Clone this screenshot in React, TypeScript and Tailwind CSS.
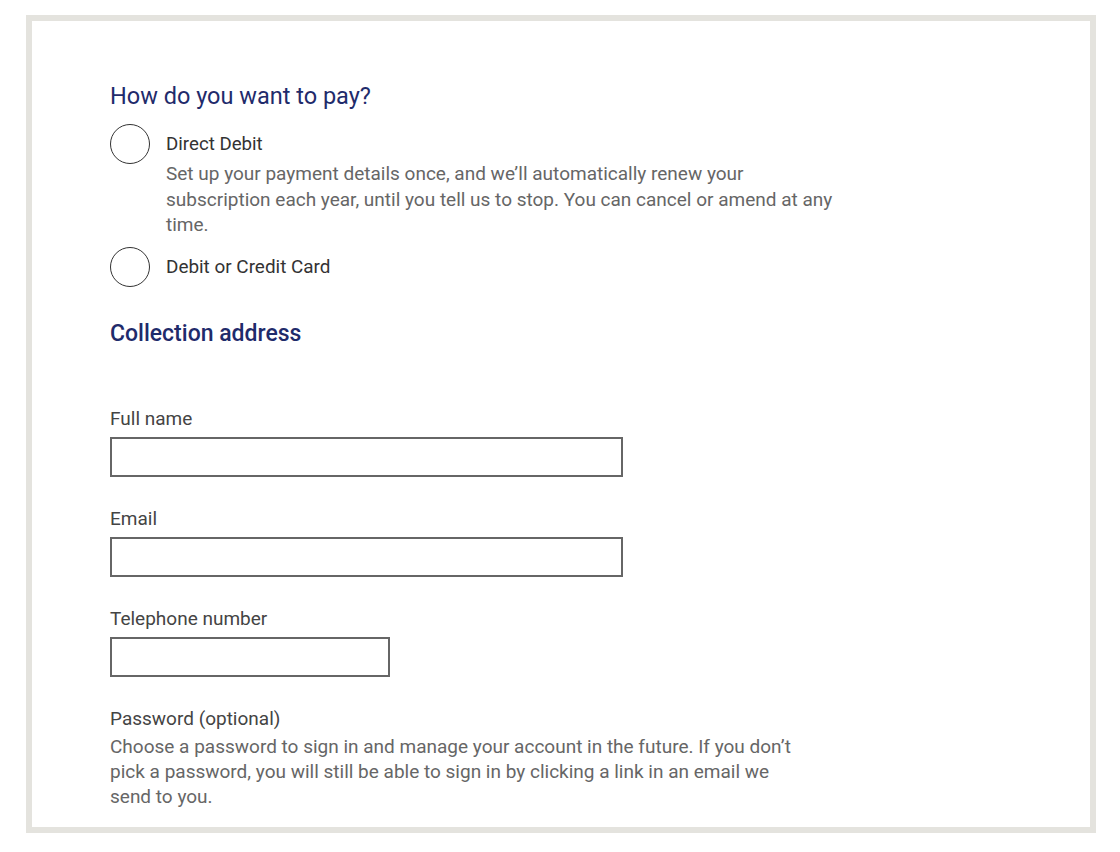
import React from "react";

function Radio() {
  return <div className="w-10 h-10 rounded-full border-[1.5px] border-[#333] shrink-0" />;
}

function Field({ label, width }: { label: string; width: string }) {
  return (
    <div className="mb-[29px]">
      <div className="text-[19px] leading-[25px] text-[#444]">{label}</div>
      <div className={`mt-[6px] h-10 border-2 border-[#666] bg-white ${width}`} />
    </div>
  );
}

export default function App() {
  return (
    <div className="w-[1120px] h-[852px] bg-white pt-[15px] pl-[26px]" style={{ fontFamily: "Roboto, 'Liberation Sans', sans-serif" }}>
      <div className="w-[1070px] h-[818px] border-[6px] border-[#e4e3de] pl-[78px] pt-[61px] overflow-hidden">
        <h2 className="text-[23.5px] leading-[28px] text-[#1f2b6b]">How do you want to pay?</h2>

        <div className="mt-[14px] flex items-start">
          <Radio />
          <div className="ml-4 pt-[8px]">
            <div className="text-[18.7px] leading-[25px] text-[#333]">Direct Debit</div>
            <p className="mt-1 w-[680px] text-[19px] leading-[25.5px] text-[#666]">
              Set up your payment details once, and we’ll automatically renew your subscription each year, until you tell us to stop. You can cancel or amend at any time.
            </p>
          </div>
        </div>

        <div className="mt-[9px] flex items-center">
          <Radio />
          <div className="ml-4 text-[18.9px] leading-[25px] text-[#333]">Debit or Credit Card</div>
        </div>

        <h2 className="mt-[33px] text-[23px] leading-[28px] font-medium text-[#1f2b6b]">Collection address</h2>

        <div className="mt-[58px]">
          <Field label="Full name" width="w-[513px]" />
          <Field label="Email" width="w-[513px]" />
          <Field label="Telephone number" width="w-[280px]" />
          <div>
            <div className="text-[19px] leading-[25px] text-[#444]">Password (optional)</div>
            <p className="mt-[3px] w-[690px] text-[19px] leading-[25px] text-[#666]">
              Choose a password to sign in and manage your account in the future. If you don’t pick a password, you will still be able to sign in by clicking a link in an email we send to you.
            </p>
          </div>
        </div>
      </div>
    </div>
  );
}
